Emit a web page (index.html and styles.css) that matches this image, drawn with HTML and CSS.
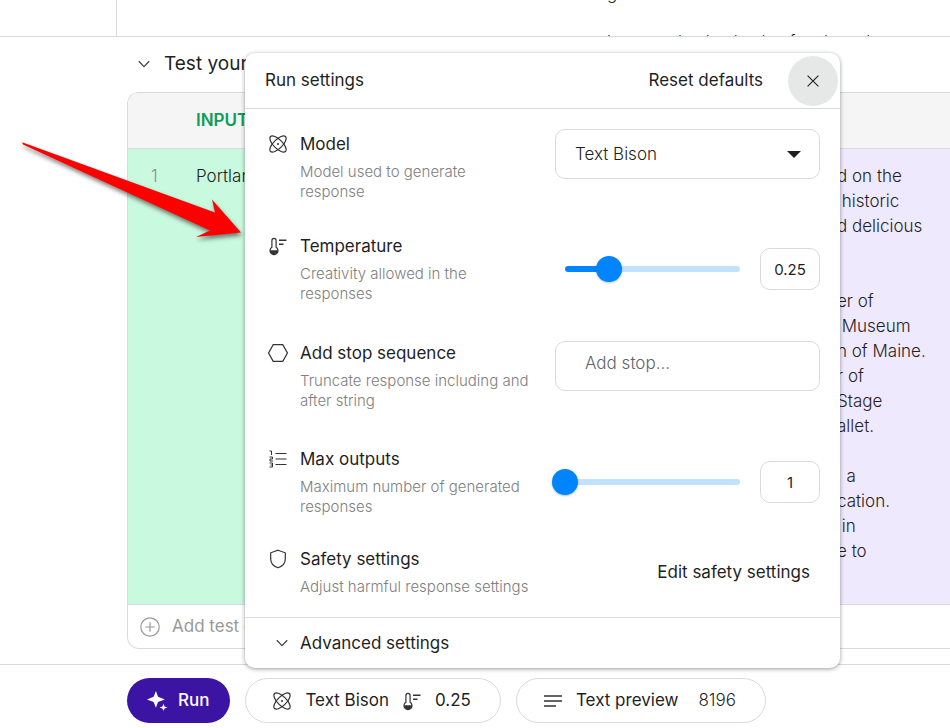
FILE: index.html
```html
<!DOCTYPE html>
<html lang="en">
<head>
<meta charset="utf-8">
<title>Run settings</title>
<link rel="stylesheet" href="styles.css">
</head>
<body>
<svg class="sprite" aria-hidden="true">
  <symbol id="atom" viewBox="0 0 20 20">
    <g fill="none" stroke="currentColor" stroke-width="1.2">
      <ellipse cx="10" cy="10" rx="10.6" ry="4.4" transform="rotate(45 10 10)"/>
      <ellipse cx="10" cy="10" rx="10.6" ry="4.4" transform="rotate(-45 10 10)"/>
    </g>
    <circle cx="10" cy="10" r="1" fill="currentColor"/>
  </symbol>
  <symbol id="thermo" viewBox="0 0 20 20">
    <path d="M3.9 11.2V4.4a2.1 2.1 0 0 1 4.2 0v6.8a4 4 0 1 1-4.2 0z" fill="none" stroke="currentColor" stroke-width="1.2"/>
    <path d="M2 14.2h8a4 4 0 0 1-8 0z" fill="currentColor"/>
    <path d="M11 4.3h7.5M11 8.2h4.5" stroke="currentColor" stroke-width="1.4"/>
  </symbol>
  <symbol id="chevron" viewBox="0 0 12 12">
    <path d="M.8 3.2 6 8.6l5.2-5.4" fill="none" stroke="currentColor" stroke-width="1.3"/>
  </symbol>
</svg>

<header class="top">
  <div class="top-side"></div>
  <div class="top-text"><p>g</p><p class="faint">l              l     l     l     l     f      l        l</p></div>
</header>

<main class="workspace">
  <h2 class="section-title"><svg class="chev" aria-hidden="true"><use href="#chevron"/></svg>Test your prompt</h2>
  <div class="cases">
    <table>
      <thead><tr><th class="num"></th><th class="in">INPUT</th><th class="out"></th></tr></thead>
      <tbody><tr>
        <td class="num">1</td>
        <td class="in">Portland</td>
        <td class="out">d on the
 historic
d delicious


er of
 Museum
n of Maine.
r of
Stage
allet.

  a
cation.
 in
e to</td>
      </tr></tbody>
    </table>
    <button class="add-case" type="button">
      <svg viewBox="0 0 20 20" aria-hidden="true"><g fill="none" stroke="currentColor" stroke-width="1.2"><circle cx="10" cy="10" r="9.2"/><path d="M10 5.2v9.6M5.2 10h9.6"/></g></svg>Add test case
    </button>
  </div>
</main>

<footer class="runbar">
  <button class="run" type="button">
    <svg viewBox="0 0 20 20" aria-hidden="true"><path fill="currentColor" d="M8.5 1 10.5 6.5 17 9l-6.500 2.500L8.500 17l-2.200-5.500L0 9l6.300-2.500zM15.700 13l1 2.600 2.800 1-2.800 1-1 2.400-1-2.400-2.700-1 2.700-1z"/></svg>Run
  </button>
  <button class="pill model-pill" type="button">
    <svg class="ico" aria-hidden="true"><use href="#atom"/></svg><span>Text Bison</span>
    <svg class="ico" aria-hidden="true"><use href="#thermo"/></svg><span>0.25</span>
  </button>
  <button class="pill preview-pill" type="button">
    <svg class="ico" viewBox="0 0 20 20" aria-hidden="true"><path d="M1 5h18M1 10h18M1 15h12" stroke="currentColor" stroke-width="1.3"/></svg><span>Text preview</span><span class="light">8196</span>
  </button>
</footer>

<section class="dialog" role="dialog" aria-labelledby="dialog-title">
  <header class="dialog-head">
    <h1 id="dialog-title">Run settings</h1>
    <button class="link" type="button">Reset defaults</button>
    <button class="close" type="button" aria-label="Close"><svg viewBox="0 0 12 12" aria-hidden="true"><path d="m.6.6 10.800 10.800M11.400.6.6 11.400" stroke="currentColor" stroke-width="1.1"/></svg></button>
  </header>
  <div class="dialog-body">
    <div class="setting">
      <svg class="ico" aria-hidden="true"><use href="#atom"/></svg>
      <div class="label"><label for="model">Model</label><p>Model used to generate response</p></div>
      <div class="control raised">
        <span class="select"><select id="model"><option>Text Bison</option></select></span>
      </div>
    </div>
    <div class="setting">
      <svg class="ico" aria-hidden="true"><use href="#thermo"/></svg>
      <div class="label"><label for="temp">Temperature</label><p>Creativity allowed in the responses</p></div>
      <div class="control">
        <span class="slider warm"><input id="temp" type="range" min="0" max="1" step="0.05" value="0.25"></span>
        <input class="value" type="text" value="0.25" aria-label="Temperature value">
      </div>
    </div>
    <div class="setting roomy">
      <svg class="ico" viewBox="0 0 20 20" aria-hidden="true"><path d="M5.200 1.700h9.600l4.600 8.300-4.600 8.300H5.200L.6 10z" fill="none" stroke="currentColor" stroke-width="1.200"/></svg>
      <div class="label"><label for="stop">Add stop sequence</label><p>Truncate response including and after string</p></div>
      <div class="control top-aligned"><input id="stop" class="stop" type="text" placeholder="Add stop..."></div>
    </div>
    <div class="setting">
      <svg class="ico" viewBox="0 0 20 20" aria-hidden="true"><g fill="none" stroke="currentColor"><path d="M7.500 4.500H18.500M7.500 10H18.500M7.500 15.500H18.500" stroke-width="1.200"/><path d="M1.500 2H3.500V6M1.500 8H4.500V10H2V12H5M1.500 14H4.500V18H1.500M2.500 16H4.500"/></g></svg>
      <div class="label"><label for="max">Max outputs</label><p>Maximum number of generated responses</p></div>
      <div class="control">
        <span class="slider"><input id="max" type="range" min="1" max="8" value="1"></span>
        <input class="value" type="text" value="1" aria-label="Max outputs value">
      </div>
    </div>
    <div class="setting last">
      <svg class="ico" viewBox="0 0 20 20" aria-hidden="true"><path d="m10 1.200 7.300 2.600v6c0 4.400-3.200 7.700-7.300 9-4.100-1.300-7.300-4.600-7.300-9v-6z" fill="none" stroke="currentColor" stroke-width="1.200"/></svg>
      <div class="label"><h3>Safety settings</h3><p>Adjust harmful response settings</p></div>
      <div class="control end"><button class="link" type="button">Edit safety settings</button></div>
    </div>
  </div>
  <button class="advanced" type="button"><svg class="chev" aria-hidden="true"><use href="#chevron"/></svg>Advanced settings</button>
</section>

<svg class="arrow" viewBox="0 0 230 110" aria-hidden="true"><path fill="#f00" d="M1 1.500 2 3.500 189 89.500 175 96 220 91.500 191 58.500 194 71.500 2.500 1.800z"/></svg>
</body>
</html>
```
FILE: styles.css
```css
* { box-sizing: border-box; }
body {
  margin: 0;
  position: relative;
  min-height: 100vh;
  overflow: hidden;
  background: #fff;
  color: #1f1f1f;
  font: 400 17px/25px Inter, Roboto, sans-serif;
}
h1, h2, h3, p { margin: 0; font: inherit; }
button, input, select { font: inherit; color: inherit; }
button { border: 0; background: none; padding: 0; }
.sprite { display: none; }
.ico { width: 20px; height: 20px; flex: none; color: #333; }
.chev { width: 12px; height: 12px; flex: none; color: #444; }

.top { display: flex; height: 37px; overflow: hidden; border-bottom: 1px solid #dadada; }
.top-side { width: 117px; flex: none; border-right: 1px solid #dadada; }
.top-text { padding-left: 490px; margin-top: -19px; white-space: pre; font-weight: 300; }
.top-text .faint { margin-top: 24px; }

.workspace { padding: 14px 0 15px 127px; }
.section-title { display: flex; align-items: center; gap: 14px; padding-left: 11px; font-size: 19px; margin-bottom: 16px; }
.cases { border: 1px solid #dadada; border-right: 0; border-radius: 12px 0 0 12px; overflow: hidden; }
table { width: 100%; border-collapse: collapse; table-layout: fixed; text-align: left; }
th { height: 55px; padding: 0; background: #f5f5f5; border-bottom: 1px solid #dadada; color: #0f9d58; font-weight: 600; }
td { height: 456px; padding: 15px 0 0; vertical-align: top; font-weight: 300; white-space: pre; }
.num { width: 68px; }
td.num { padding-left: 23px; color: #8a8f8c; }
.in { width: 320px; }
td.num, td.in { background: #c9f9de; }
td.out { background: #efe9fd; padding-left: 321px; }
.add-case { display: flex; align-items: center; gap: 12px; width: 100%; height: 44px; padding-left: 12px; border-top: 1px solid #dadada; color: #999; }
.add-case svg { width: 20px; height: 20px; }

.runbar { display: flex; gap: 15px; padding: 13px 0 0 127px; border-top: 1px solid #dadada; }
.runbar button { display: flex; align-items: center; height: 45px; border-radius: 23px; }
.run { gap: 10px; padding: 0 21px 0 20px; background: #3c14a3; color: #fff; font-weight: 500; }
.run svg { width: 21px; height: 21px; }
.pill { gap: 13px; padding: 0 29px 0 26px; border: 1px solid #dadada; }
.light { font-weight: 300; padding-left: 7px; }

.dialog {
  position: absolute;
  top: 53px;
  left: 245px;
  right: 110px;
  background: #fff;
  border-radius: 10px;
  box-shadow: 0 1px 4px rgba(0, 0, 0, .4);
}
.dialog-head { display: flex; align-items: center; height: 56px; padding: 0 2px 0 20px; border-bottom: 1px solid #dadada; }
.dialog-head h1 { flex: 1; }
.close { display: grid; place-items: center; width: 50px; height: 50px; margin-left: 25px; border-radius: 50%; background: #e6e8e8; }
.close svg { width: 12px; height: 12px; }
.dialog-body { padding: 7px 20px 4px 23px; border-bottom: 1px solid #dadada; }
.setting { display: grid; grid-template-columns: 20px 1fr 265px; column-gap: 12px; padding: 16px 0; }
.setting.roomy { padding: 21px 0 20px; }
.setting.last { padding-top: 14px; }
.setting > .ico { margin-top: 2px; }
.label label, .label h3 { display: block; line-height: 24px; margin-bottom: 6px; }
.label p { color: #808080; font-size: 15px; line-height: 20px; font-weight: 300; max-width: 231px; }
.control { display: flex; align-items: center; justify-content: space-between; }
.control.raised { align-items: start; margin-top: -3px; height: 50px; }
.control.top-aligned { align-items: start; }
.control.end { justify-content: end; padding-right: 10px; }
.select, .stop, .value { border: 1px solid #dadada; border-radius: 10px; background: #fff; }
.select { position: relative; width: 100%; }
.select::after { content: ""; position: absolute; right: 18px; top: 21px; border: 7px solid transparent; border-top-color: #1f1f1f; border-bottom: 0; pointer-events: none; }
.select select { appearance: none; width: 100%; height: 48px; border: 0; padding: 0 19px; background: none; font-weight: 300; }
.stop { width: 100%; height: 50px; padding: 0 29px 6px; font-weight: 300; }
.stop::placeholder { color: #5f6368; opacity: 1; }
.value { width: 60px; height: 42px; padding: 0; text-align: center; font-size: 15px; }
.slider { position: relative; width: 175px; margin-left: 10px; }
.slider::before { content: ""; position: absolute; inset: 10px 0; border-radius: 3px; background: #c2e0ff; }
.slider.warm::before { background: linear-gradient(to right, #0084ff 25%, #c2e0ff 25%); }
.slider input { appearance: none; position: relative; display: block; width: calc(100% + 26px); height: 26px; margin: 0 -13px; background: none; }
.slider input::-webkit-slider-thumb { appearance: none; width: 26px; height: 26px; border-radius: 50%; background: #0084ff; box-shadow: 0 1px 2px rgba(0, 0, 0, .25); }
.advanced { display: flex; align-items: center; gap: 12px; width: 100%; height: 50px; padding-left: 31px; }

.arrow { position: absolute; left: 21px; top: 141px; width: 230px; height: 110px; filter: drop-shadow(1px 3px 2px rgba(0, 0, 0, .5)); pointer-events: none; }
```
